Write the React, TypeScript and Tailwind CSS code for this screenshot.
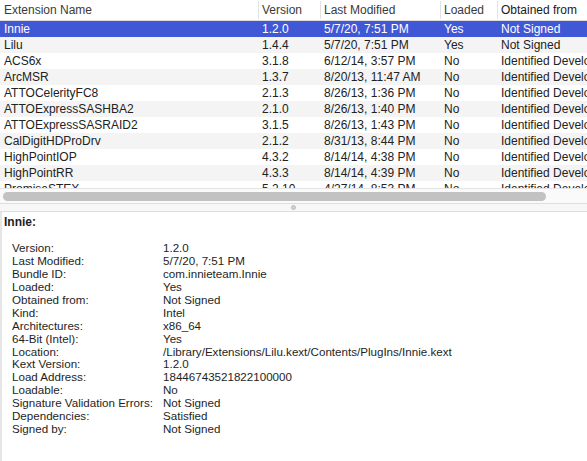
import React from 'react'

const rows = [
    ['Innie', '1.2.0', '5/7/20, 7:51 PM', 'Yes', 'Not Signed'],
    ['Lilu', '1.4.4', '5/7/20, 7:51 PM', 'Yes', 'Not Signed'],
    ['ACS6x', '3.1.8', '6/12/14, 3:57 PM', 'No', 'Identified Developer'],
    ['ArcMSR', '1.3.7', '8/20/13, 11:47 AM', 'No', 'Identified Developer'],
    ['ATTOCelerityFC8', '2.1.3', '8/26/13, 1:36 PM', 'No', 'Identified Developer'],
    ['ATTOExpressSASHBA2', '2.1.0', '8/26/13, 1:40 PM', 'No', 'Identified Developer'],
    ['ATTOExpressSASRAID2', '3.1.5', '8/26/13, 1:43 PM', 'No', 'Identified Developer'],
    ['CalDigitHDProDrv', '2.1.2', '8/31/13, 8:44 PM', 'No', 'Identified Developer'],
    ['HighPointIOP', '4.3.2', '8/14/14, 4:38 PM', 'No', 'Identified Developer'],
    ['HighPointRR', '4.3.3', '8/14/14, 4:39 PM', 'No', 'Identified Developer'],
    ['PromiseSTEX', '5.2.10', '4/27/14, 8:53 PM', 'No', 'Identified Developer'],
]

const details = [
    ['Version:', '1.2.0'],
    ['Last Modified:', '5/7/20, 7:51 PM'],
    ['Bundle ID:', 'com.innieteam.Innie'],
    ['Loaded:', 'Yes'],
    ['Obtained from:', 'Not Signed'],
    ['Kind:', 'Intel'],
    ['Architectures:', 'x86_64'],
    ['64-Bit (Intel):', 'Yes'],
    ['Location:', '/Library/Extensions/Lilu.kext/Contents/PlugIns/Innie.kext'],
    ['Kext Version:', '1.2.0'],
    ['Load Address:', '18446743521822100000'],
    ['Loadable:', 'No'],
    ['Signature Validation Errors:', 'Not Signed'],
    ['Dependencies:', 'Satisfied'],
    ['Signed by:', 'Not Signed'],
]

const cols = 'grid grid-cols-[258px_62px_120px_57px_90px]'

export default function App() {
    return (
        <div
            className="w-[587px] h-[461px] overflow-hidden bg-white flex flex-col text-[#222]"
            style={{ fontFamily: '"Liberation Sans", Arial, sans-serif' }}
        >
            {/* Table */}
            <div className="h-[188px] shrink-0 overflow-hidden flex flex-col">
                <div className={`${cols} h-[21px] shrink-0 border-b border-[#dcdcdc] text-[12px] text-[#3a3a3a] items-center`}>
                    <div className="pl-1 whitespace-nowrap">Extension Name</div>
                    <div className="pl-[3px] border-l border-[#e2e2e2] whitespace-nowrap">Version</div>
                    <div className="pl-[3px] border-l border-[#e2e2e2] whitespace-nowrap">Last Modified</div>
                    <div className="pl-[3px] border-l border-[#e2e2e2] whitespace-nowrap">Loaded</div>
                    <div className="pl-[3px] border-l border-[#e2e2e2] whitespace-nowrap overflow-hidden text-[#1a1a1a]">Obtained from</div>
                </div>
                {rows.map((r, i) => (
                    <div
                        key={r[0]}
                        className={`${cols} h-[16px] shrink-0 items-center text-[12px] leading-[16px] ${
                            i === 0 ? 'bg-[#4158d6] text-white' : i % 2 === 1 ? 'bg-[#f4f4f4]' : 'bg-white'
                        }`}
                    >
                        <div className="pl-1 whitespace-nowrap">{r[0]}</div>
                        <div className="pl-[4px] whitespace-nowrap">{r[1]}</div>
                        <div className="pl-[4px] whitespace-nowrap">{r[2]}</div>
                        <div className="pl-[4px] whitespace-nowrap">{r[3]}</div>
                        <div className="pl-[4px] whitespace-nowrap">{r[4]}</div>
                    </div>
                ))}
            </div>

            {/* Horizontal scroller */}
            <div className="h-[15px] shrink-0 border-t border-[#e4e4e4] bg-[#fafafa] flex items-center px-[3px]">
                <div className="h-[9px] w-[543px] rounded-full bg-[#c2c2c2]" />
            </div>

            {/* Split divider */}
            <div className="h-[9px] shrink-0 border-t border-b border-[#dedede] bg-[#f7f7f7] flex items-center justify-center">
                <div className="w-[5px] h-[5px] rounded-full bg-[#d0d0d0] border border-[#bdbdbd]" />
            </div>

            {/* Details */}
            <div className="flex-1 border-l-2 border-[#e6e6e6] text-[11.6px] text-[#1e1e1e]">
                <div className="pl-[2px] pt-[3px] font-bold leading-[14px] text-[12px]">Innie:</div>
                <div className="grid grid-cols-[151px_1fr] pl-[10px] mt-[13px] leading-[12.93px]">
                    {details.map(([k, v]) => (
                        <React.Fragment key={k}>
                            <div className="whitespace-nowrap">{k}</div>
                            <div className="whitespace-nowrap">{v}</div>
                        </React.Fragment>
                    ))}
                </div>
            </div>
        </div>
    )
}
